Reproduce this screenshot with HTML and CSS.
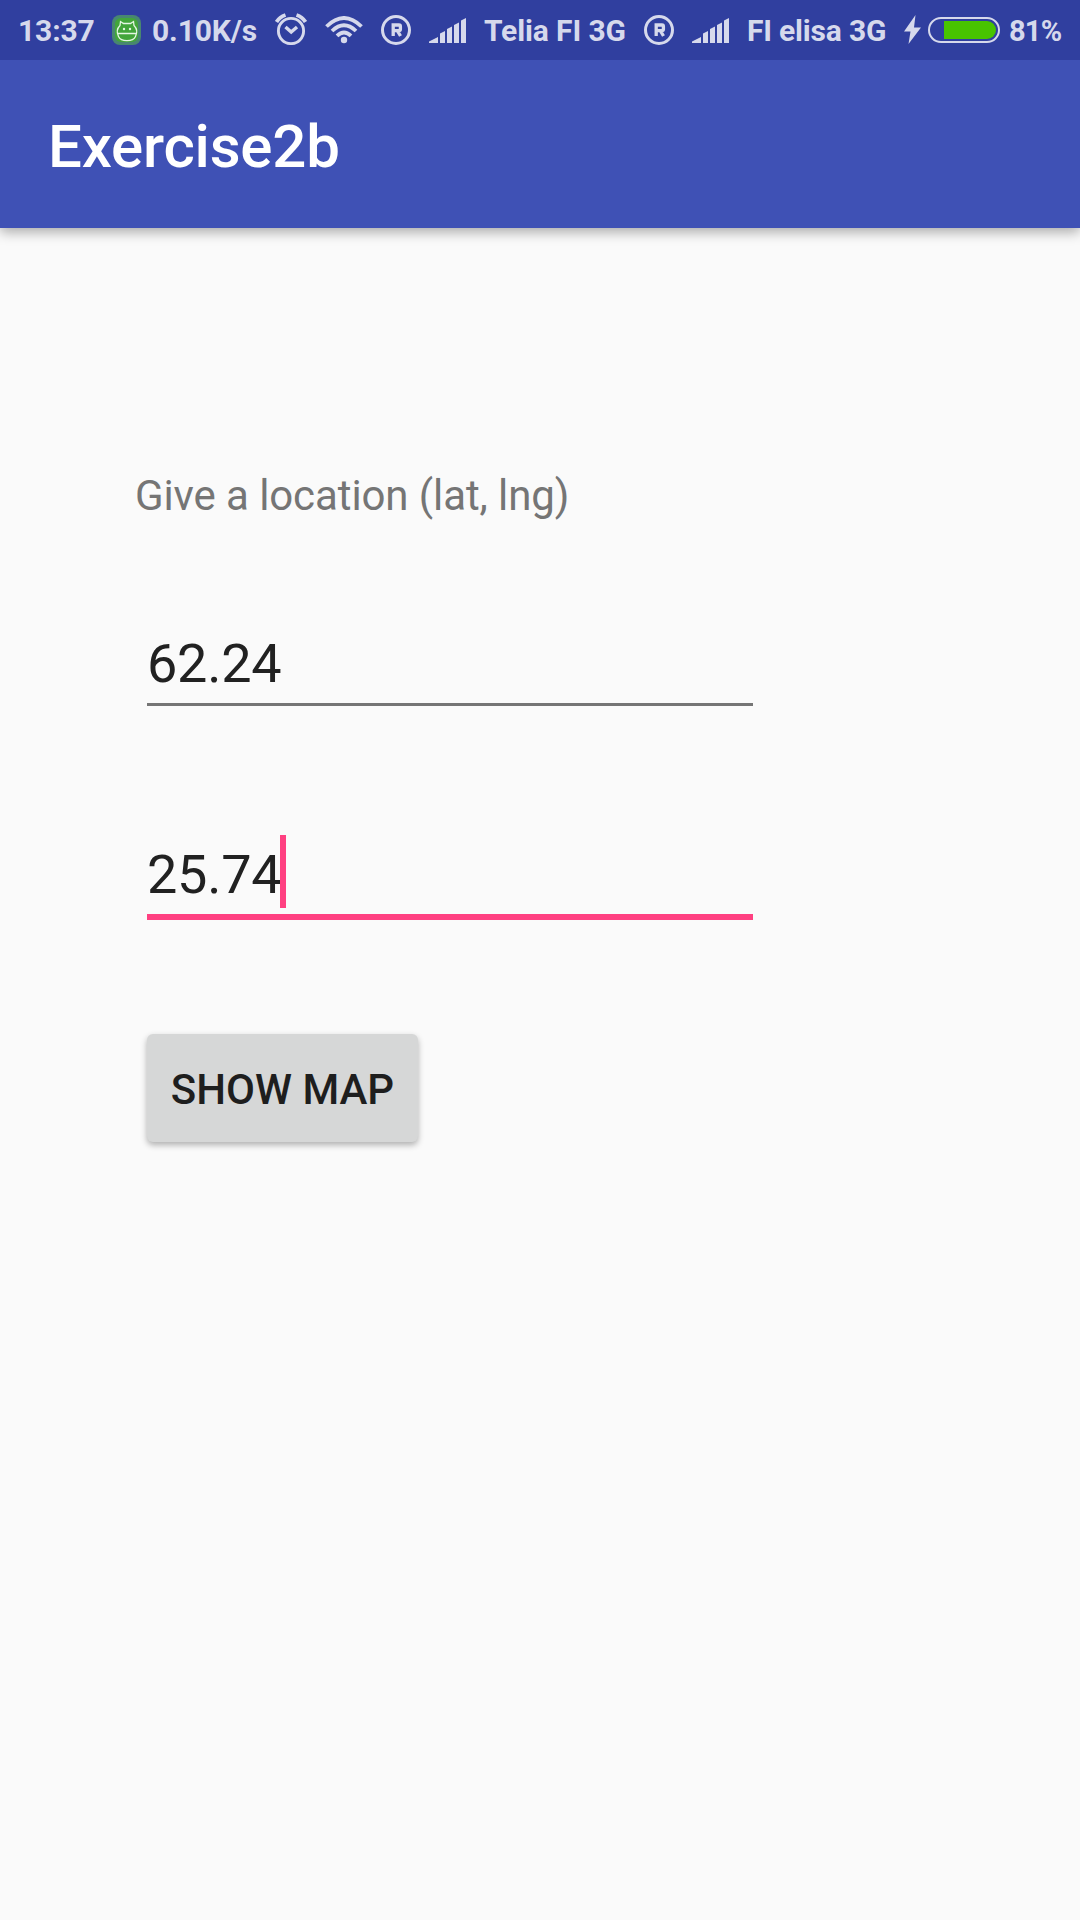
FILE: index.html
```html
<!DOCTYPE html>
<html lang="en">
<head>
<meta charset="utf-8">
<title>Exercise2b</title>
<link rel="stylesheet" href="styles.css">
</head>
<body>
<svg class="defs" width="0" height="0">
  <symbol id="registered" viewBox="0 0 30 30">
    <circle cx="15" cy="15" r="13.500" fill="none" stroke="currentColor" stroke-width="3"/>
    <path d="M12.200 21V10H18Q19.400 10 19.400 11.400V14.200Q19.400 15.600 18 15.600H12.500M16.500 16L19.500 21" fill="none" stroke="currentColor" stroke-width="3.300"/>
  </symbol>
  <symbol id="signal" viewBox="0 0 37 26">
    <path d="M0 25V23.500L9 19V25ZM11 25V15.500L16 13V25ZM18 25V11L23 8.500V25ZM25 25V7L30 4.500V25ZM32 25V2.500L37 0V25Z" fill="currentColor"/>
  </symbol>
</svg>
<div class="status">
  <span class="time">13:37</span>
  <svg class="app" width="30" height="30" viewBox="0 0 30 30">
    <rect width="29" height="30" rx="8" fill="#488770"/>
    <rect x="3" y="3" width="23" height="24" rx="6" fill="#42a53a"/>
    <path d="M8 10.500L8.500 6.500L11.500 8.500H18.500L21.500 6.500L22 10.500C25.500 14 25 18.500 23.500 21.500C21 27 9 27 6.500 21.500C5 18.500 4.500 14 8 10.500ZM5.500 18.500H24.500" fill="none" stroke="#e4f6e3" stroke-width="1.300"/>
    <circle cx="12" cy="14" r="1.200" fill="#e4f6e3"/><circle cx="18" cy="14" r="1.200" fill="#e4f6e3"/>
  </svg>
  <span class="speed">0.10K/s</span>
  <svg class="alarm" width="32" height="32" viewBox="0 0 32 32" fill="none" stroke="currentColor">
    <circle cx="16" cy="18" r="12.600" stroke-width="2.900"/>
    <path d="M10.500 14L16.200 19L22 14" stroke-width="3.400"/>
    <path d="M1.500 9Q4.500 4 10.500 2M21.500 2Q27.500 4 30.500 9" stroke-width="3.800"/>
  </svg>
  <svg class="wifi" width="38" height="28" viewBox="0 0 38 28">
    <path d="M1.500 10.500Q19 -6.500 36.500 10.500M7 15Q19 3.500 31 15M12 19.800Q19 13 26 19.800" fill="none" stroke="currentColor" stroke-width="3.800"/>
    <circle cx="19" cy="24" r="3.200" fill="currentColor"/>
  </svg>
  <svg class="reg" width="30" height="30"><use href="#registered"/></svg>
  <svg class="bars" width="37" height="26"><use href="#signal"/></svg>
  <span class="carrier-a">Telia FI 3G</span>
  <svg class="reg" width="30" height="30"><use href="#registered"/></svg>
  <svg class="bars" width="37" height="26"><use href="#signal"/></svg>
  <span class="carrier-b">FI elisa 3G</span>
  <svg class="bolt" width="17" height="29" viewBox="0 0 17 29"><path d="M11.500 0L0 16.500H6.500L4.500 29L17 12.500H10Z" fill="currentColor"/></svg>
  <svg class="battery" width="72" height="26" viewBox="0 0 72 26">
    <rect x="1" y="1" width="70" height="24" rx="12" fill="none" stroke="currentColor" stroke-width="2"/>
    <path d="M16 4H59A9 9 0 0 1 59 22H16Z" fill="#48c400"/>
  </svg>
  <span class="percent">81%</span>
</div>
<header class="toolbar"><h1>Exercise2b</h1></header>
<main class="form">
  <p class="prompt">Give a location (lat, lng)</p>
  <div class="field">62.24</div>
  <div class="field focused"><span>25.74</span><i class="caret"></i></div>
  <button class="button" type="button">SHOW MAP</button>
</main>
</body>
</html>
```
FILE: styles.css
```css
* { box-sizing: border-box; }
body {
  margin: 0;
  height: 1920px;
  overflow: hidden;
  background: #fafafa;
  font-family: Roboto, sans-serif;
  color: #212121;
}
.defs { display: block; }
.status {
  position: relative;
  z-index: 1;
  display: flex;
  align-items: center;
  height: 60px;
  background: #303f9f;
  color: #d6d9ec;
  font-size: 30px;
  font-weight: 700;
  line-height: 60px;
  letter-spacing: -.12px;
  white-space: nowrap;
}
.status > * { flex: none; }
.status span { padding-top: 2px; }
.time { margin-left: 18px; width: 94px; }
.app { width: 30px; }
.speed { margin-left: 10px; width: 123px; }
.alarm { margin-top: -2px; }
.wifi { margin-left: 18px; }
.reg { margin-left: 18px; }
.bars { margin-left: 18px; margin-top: 2px; }
.carrier-a { margin-left: 18px; width: 142px; }
.carrier-b { margin-left: 18px; width: 139px; letter-spacing: -.2px; }
.bolt { margin-left: 18px; margin-top: -1px; }
.battery { margin-left: 7px; }
.percent { margin-left: 9px; font-size: 29px; letter-spacing: -.8px; }
.toolbar {
  position: relative;
  display: flex;
  align-items: center;
  height: 168px;
  padding: 5px 48px 0;
  background: #3f51b5;
  box-shadow: 0 4px 12px rgba(0, 0, 0, .33);
}
.toolbar h1 {
  margin: 0;
  color: #fff;
  font-size: 60px;
  font-weight: 500;
  line-height: 70px;
  letter-spacing: -.2px;
}
.form {
  display: flex;
  flex-direction: column;
  align-items: flex-start;
  padding: 240px 0 0 135px;
}
.prompt {
  margin: 0;
  font-size: 42px;
  line-height: 56px;
  letter-spacing: -.1px;
  color: #757575;
}
.field {
  display: flex;
  width: 606px;
  height: 74px;
  margin: 108px 0 0 12px;
  border-bottom: 3px solid #757575;
  font-size: 54px;
  line-height: 64px;
  letter-spacing: -.25px;
}
.field.focused {
  height: 85px;
  margin-top: 129px;
  border-bottom: 6px solid #ff4081;
  line-height: 80px;
}
.caret {
  width: 6px;
  height: 73px;
  margin-left: -1px;
  background: #ff4081;
}
.button {
  width: 271px;
  height: 108px;
  margin: 114px 0 0 12px;
  padding: 3px 0 0;
  border: 0;
  border-radius: 6px;
  background: #d6d7d7;
  box-shadow: 0 3px 6px rgba(0, 0, 0, .3);
  color: #1e1e1e;
  font: 500 42px/50px Roboto, sans-serif;
}
```
